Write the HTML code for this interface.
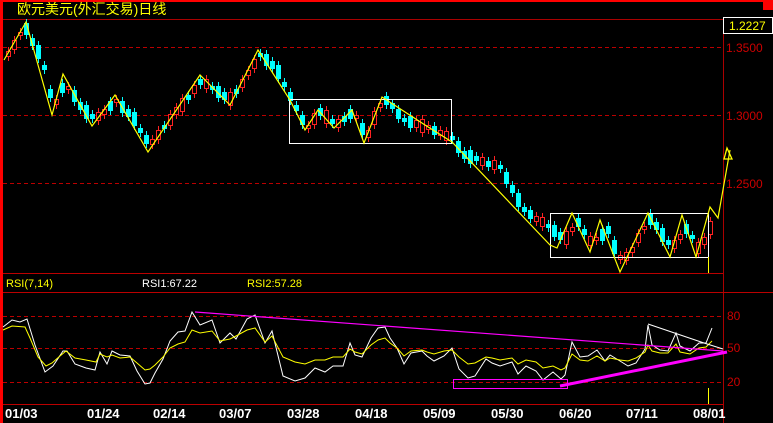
<!DOCTYPE html>
<html><head><meta charset="utf-8"><style>
html,body{margin:0;padding:0;background:#000;width:773px;height:423px;overflow:hidden}
svg{display:block}
text{font-family:"Liberation Sans","Noto Sans CJK SC",sans-serif}
</style></head><body>
<svg width="773" height="423" xmlns="http://www.w3.org/2000/svg">
<rect width="773" height="423" fill="#000"/>
<rect x="0" y="0" width="773" height="2" fill="#f00"/>
<rect x="763" y="0" width="10" height="10" fill="#f00"/>
<rect x="0" y="0" width="3" height="423" fill="#f00"/>
<text x="17" y="14" font-size="14" fill="#ff0">欧元美元(外汇交易)日线</text>
<line x1="3" y1="19.5" x2="723" y2="19.5" stroke="#a00"/>
<line x1="723.5" y1="19" x2="723.5" y2="423" stroke="#a00"/>
<g stroke="#b00" stroke-dasharray="4,3">
<line x1="3" y1="47.5" x2="723" y2="47.5"/>
<line x1="3" y1="115.5" x2="723" y2="115.5"/>
<line x1="3" y1="183.5" x2="723" y2="183.5"/>
<line x1="3" y1="316.5" x2="723" y2="316.5"/>
<line x1="3" y1="348.5" x2="723" y2="348.5"/>
<line x1="3" y1="382.5" x2="723" y2="382.5"/>
</g>
<line x1="3" y1="273.5" x2="723" y2="273.5" stroke="#b00"/>
<line x1="3" y1="292.5" x2="773" y2="292.5" stroke="#b00"/>
<line x1="3" y1="404.5" x2="723" y2="404.5" stroke="#b00"/>
<rect x="723.5" y="17.5" width="49" height="16" fill="#000" stroke="#fff"/>
<text x="729" y="30" font-size="12" fill="#ff0">1.2227</text>
<g font-size="12" fill="#c00">
<text x="726" y="52">1.3500</text>
<text x="726" y="120">1.3000</text>
<text x="726" y="188">1.2500</text>
<text x="727" y="320">80</text>
<text x="727" y="352">50</text>
<text x="727" y="386">20</text>
</g>
<text x="6" y="287" font-size="11" fill="#ff0">RSI(7,14)</text>
<text x="142" y="287" font-size="11" fill="#fff">RSI1:67.22</text>
<text x="247" y="287" font-size="11" fill="#ff0">RSI2:57.28</text>
<g font-family="Liberation Mono" font-weight="bold" font-size="13" fill="#fff">
<text x="5" y="418">01/03</text><text x="87" y="418">01/24</text><text x="153" y="418">02/14</text>
<text x="219" y="418">03/07</text><text x="287" y="418">03/28</text><text x="355" y="418">04/18</text>
<text x="423" y="418">05/09</text><text x="491" y="418">05/30</text><text x="559" y="418">06/20</text>
<text x="626" y="418">07/11</text><text x="693" y="418">08/01</text>
</g>
<!-- cyan candles -->
<path stroke="#0ff" fill="none" d="M26.5,19v20M32.5,34v16M38.5,41v22M44.5,61v13M50.5,85v17M62.5,79v18M74.5,86v20M80.5,98v16M86.5,101v22M92.5,110v13M110.5,97v18M122.5,97v20M128.5,105v16M134.5,108v22M140.5,124v13M146.5,131v17M164.5,121v12M188.5,91v13M200.5,75v14M212.5,82v12M218.5,82v20M224.5,88v16M236.5,85v13M260.5,49v12M266.5,50v20M272.5,57v16M278.5,61v22M284.5,78v13M290.5,88v17M296.5,101v14M302.5,111v18M320.5,104v16M332.5,115v13M344.5,112v14M350.5,105v18M362.5,119v20M386.5,92v17M392.5,99v14M398.5,105v18M404.5,114v12M410.5,112v20M434.5,122v17M452.5,132v12M458.5,137v20M464.5,147v16M470.5,146v22M476.5,152v13M488.5,157v14M500.5,161v12M506.5,168v20M512.5,181v16M518.5,189v22M524.5,203v13M530.5,206v17M548.5,220v12M554.5,221v20M560.5,228v16M578.5,214v17M584.5,225v14M602.5,225v20M608.5,222v16M614.5,236v22M650.5,209v20M656.5,218v16M662.5,224v22M668.5,236v13M686.5,220v18M692.5,231v12"/>
<path fill="#0ff" d="M24,23h5v12h-5zM30,38h5v8h-5zM36,45h5v14h-5zM42,65h5v5h-5zM48,89h5v9h-5zM60,83h5v10h-5zM72,90h5v12h-5zM78,102h5v8h-5zM84,105h5v14h-5zM90,114h5v5h-5zM108,101h5v10h-5zM120,101h5v12h-5zM126,109h5v8h-5zM132,112h5v14h-5zM138,128h5v5h-5zM144,135h5v9h-5zM162,125h5v4h-5zM186,95h5v5h-5zM198,79h5v6h-5zM210,86h5v4h-5zM216,86h5v12h-5zM222,92h5v8h-5zM234,89h5v5h-5zM258,53h5v4h-5zM264,54h5v12h-5zM270,61h5v8h-5zM276,65h5v14h-5zM282,82h5v5h-5zM288,92h5v9h-5zM294,105h5v6h-5zM300,115h5v10h-5zM318,108h5v8h-5zM330,119h5v5h-5zM342,116h5v6h-5zM348,109h5v10h-5zM360,123h5v12h-5zM384,96h5v9h-5zM390,103h5v6h-5zM396,109h5v10h-5zM402,118h5v4h-5zM408,116h5v12h-5zM432,126h5v9h-5zM450,136h5v4h-5zM456,141h5v12h-5zM462,151h5v8h-5zM468,150h5v14h-5zM474,156h5v5h-5zM486,161h5v6h-5zM498,165h5v4h-5zM504,172h5v12h-5zM510,185h5v8h-5zM516,193h5v14h-5zM522,207h5v5h-5zM528,210h5v9h-5zM546,224h5v4h-5zM552,225h5v12h-5zM558,232h5v8h-5zM576,218h5v9h-5zM582,229h5v6h-5zM600,229h5v12h-5zM606,226h5v8h-5zM612,240h5v14h-5zM648,213h5v12h-5zM654,222h5v8h-5zM660,228h5v14h-5zM666,240h5v5h-5zM684,224h5v10h-5zM690,235h5v4h-5z"/>
<!-- red candles -->
<path stroke="#f22" fill="none" d="M8.5,47v14M14.5,36v18M20.5,28v12M56.5,95v14M68.5,82v12M98.5,108v17M104.5,105v14M116.5,95v12M152.5,135v14M158.5,126v18M170.5,110v20M176.5,103v16M182.5,94v22M194.5,81v17M206.5,75v18M230.5,88v22M242.5,75v17M248.5,66v14M254.5,55v18M308.5,121v12M314.5,109v20M326.5,106v22M338.5,115v17M356.5,111v12M368.5,126v16M374.5,107v22M380.5,99v13M416.5,116v16M422.5,115v22M428.5,121v13M440.5,126v14M446.5,127v18M482.5,153v17M494.5,156v18M536.5,212v14M542.5,213v18M566.5,227v22M572.5,223v13M590.5,232v18M596.5,233v12M620.5,251v13M626.5,248v17M632.5,243v14M638.5,229v18M644.5,222v12M674.5,236v17M680.5,230v14M698.5,238v20M704.5,233v16M710.5,217v22"/>
<path fill="#000" stroke="#f22" d="M6.5,51.5h4v5h-4zM12.5,40.5h4v9h-4zM18.5,32.5h4v3h-4zM54.5,99.5h4v5h-4zM66.5,86.5h4v3h-4zM96.5,112.5h4v8h-4zM102.5,109.5h4v5h-4zM114.5,99.5h4v3h-4zM150.5,139.5h4v5h-4zM156.5,130.5h4v9h-4zM168.5,114.5h4v11h-4zM174.5,107.5h4v7h-4zM180.5,98.5h4v13h-4zM192.5,85.5h4v8h-4zM204.5,79.5h4v9h-4zM228.5,92.5h4v13h-4zM240.5,79.5h4v8h-4zM246.5,70.5h4v5h-4zM252.5,59.5h4v9h-4zM306.5,125.5h4v3h-4zM312.5,113.5h4v11h-4zM324.5,110.5h4v13h-4zM336.5,119.5h4v8h-4zM354.5,115.5h4v3h-4zM366.5,130.5h4v7h-4zM372.5,111.5h4v13h-4zM378.5,103.5h4v4h-4zM414.5,120.5h4v7h-4zM420.5,119.5h4v13h-4zM426.5,125.5h4v4h-4zM438.5,130.5h4v5h-4zM444.5,131.5h4v9h-4zM480.5,157.5h4v8h-4zM492.5,160.5h4v9h-4zM534.5,216.5h4v5h-4zM540.5,217.5h4v9h-4zM564.5,231.5h4v13h-4zM570.5,227.5h4v4h-4zM588.5,236.5h4v9h-4zM594.5,237.5h4v3h-4zM618.5,255.5h4v4h-4zM624.5,252.5h4v8h-4zM630.5,247.5h4v5h-4zM636.5,233.5h4v9h-4zM642.5,226.5h4v3h-4zM672.5,240.5h4v8h-4zM678.5,234.5h4v5h-4zM696.5,242.5h4v11h-4zM702.5,237.5h4v7h-4zM708.5,221.5h4v13h-4z"/>
<rect x="289.5" y="99.5" width="162" height="44" fill="none" stroke="#fff"/>
<rect x="550.5" y="213.5" width="158" height="44" fill="none" stroke="#fff"/>
<polyline fill="none" stroke="#ff0" stroke-width="1.2" points="4,60 26,22 52,115 63,74 92,126 115,95 148,152 200,75 230,105 258,50 290,100 305,130 318,110 334,128 352,110 364,143 382,97 425,125 452,142 550,245 557,248 572,213 590,252 600,220 620,272 648,213 670,257 682,215 696,257 710,207 718,218 730,150"/>
<path d="M727,148 L724,159 L732,159 Z" fill="none" stroke="#ff0" stroke-width="1.3"/>
<line x1="708.5" y1="257" x2="708.5" y2="273" stroke="#ff0"/>
<line x1="708.5" y1="388" x2="708.5" y2="404" stroke="#ff0"/>
<g fill="none">
<polyline stroke="#fff" points="3,327 12,320 20,322 27,319 35,345 45,372 53,366 63,351 67,351 75,364 86,368 95,370 100,352 107,364 112,351 120,355 130,356 137,371 145,384 150,383 155,373 163,359 170,341 178,332 185,331 192,312 200,325 212,320 220,343 230,333 236,339 247,319 255,315 265,343 272,331 283,376 295,381 305,378 315,368 325,372 333,366 343,366 350,343 355,355 362,357 371,338 378,328 385,327 390,338 397,348 404,364 411,353 422,351 427,356 434,361 444,356 452,348 459,369 468,378 475,376 486,359 492,363 500,366 512,362 518,374 526,366 536,371 543,380 548,376 553,372 561,379 565,375 572,342 580,357 588,356 597,350 605,361 610,355 620,361 628,366 636,363 645,349 648,325 652,345 660,350 668,351 676,333 680,346 690,351 699,343 706,343 712,328"/>
<polyline stroke="#ff0" points="3,330 12,326 25,327 30,338 38,357 46,366 52,363 60,356 66,351 75,358 86,360 96,362 100,354 107,357 112,355 120,358 130,357 137,363 145,370 150,369 155,365 163,357 170,348 178,344 185,342 192,330 200,333 212,331 220,341 230,339 236,336 247,330 255,328 265,342 272,336 283,357 295,362 305,364 315,360 325,360 333,357 343,357 350,349 355,352 362,354 371,345 378,340 385,338 390,343 397,348 404,356 411,351 422,350 427,352 434,354 444,351 452,350 459,357 468,364 475,363 486,357 492,358 500,360 512,358 518,364 526,360 536,362 543,368 548,367 553,366 561,370 565,368 572,354 580,360 588,361 597,356 605,361 610,358 620,360 628,361 636,358 645,352 648,345 652,351 660,353 668,353 676,344 680,352 690,354 699,348 706,347 712,341"/>
<polyline stroke="#f0f" stroke-width="1.2" points="195,312 723,351"/>
<polyline stroke="#f0f" stroke-width="3" points="560,386 727,352"/>
<rect x="453.5" y="379.5" width="114" height="9" stroke="#f0f"/>
<polyline stroke="#fff" points="648,324 704,343 723,349"/>
</g>
</svg>
</body></html>
